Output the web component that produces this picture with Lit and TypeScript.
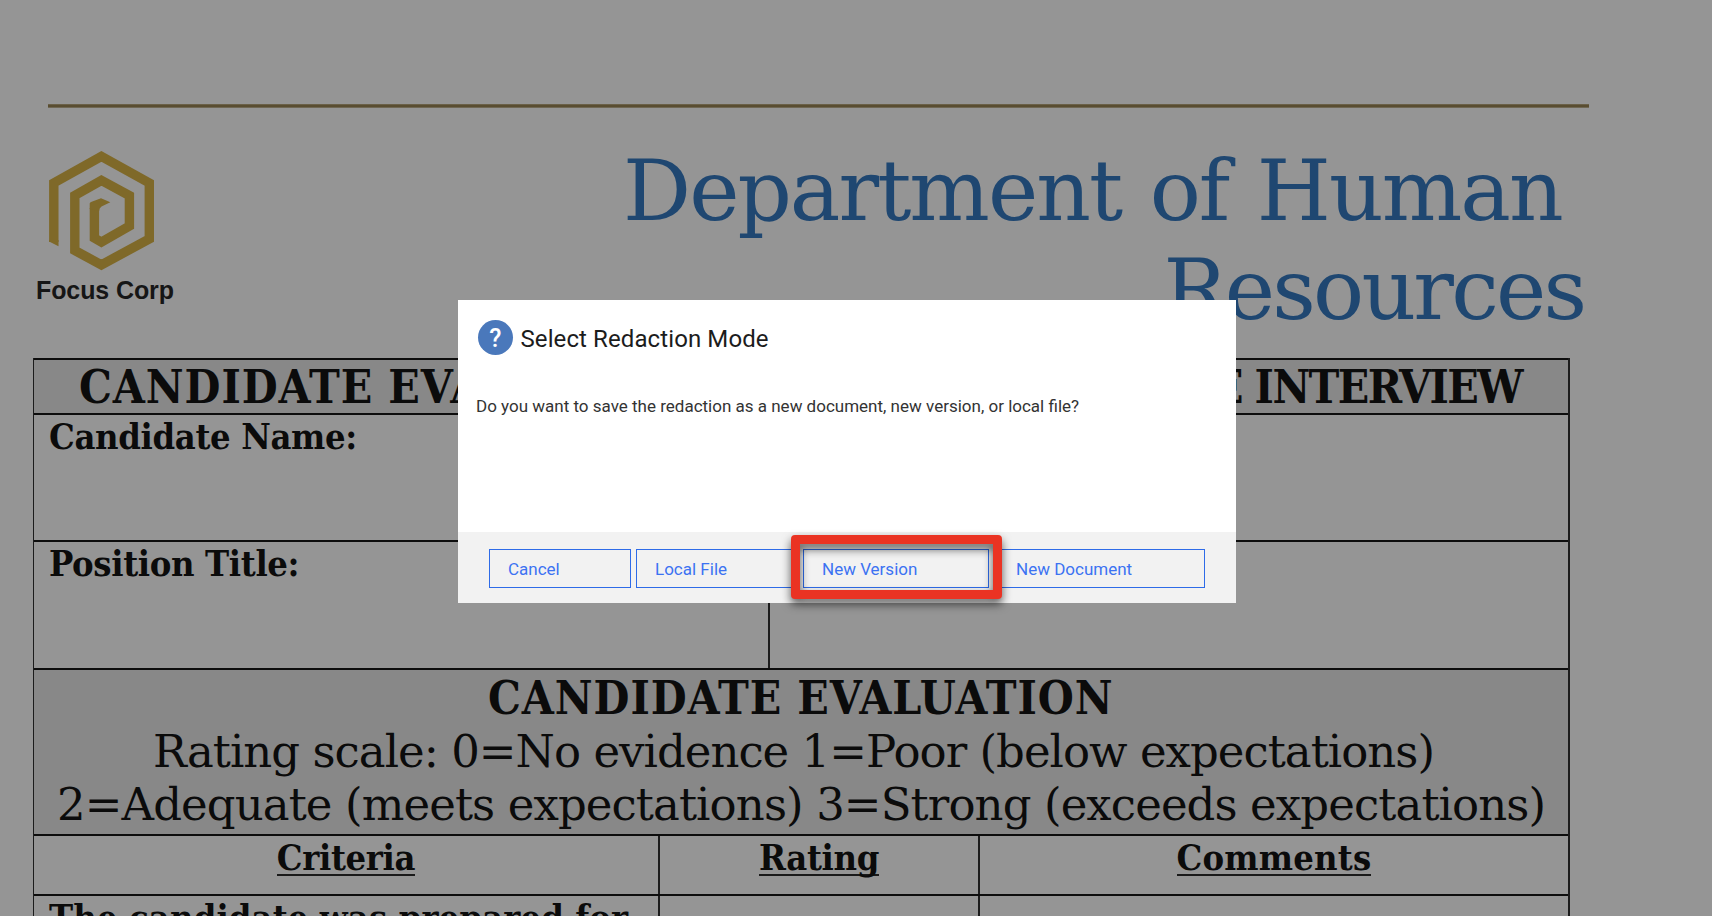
import { LitElement, html, css } from "lit";
import { customElement } from "lit/decorators.js";

@customElement("doc-page")
class DocPage extends LitElement {
  static styles = css`
    :host {
      display: block;
      height: 100%;
      overflow: hidden;
      color: #0b0b0b;
      background: #959595;
      font-family: "DejaVu Serif", serif;
      white-space: nowrap;
    }
    .rule { margin: 104px 0 0 48px; width: 1541px; height: 4px; background: linear-gradient(#6a6048 0 1px, #594d31 1px 3px, #6f6753 3px); }
    .head { display: flex; height: 250px; }
    .brand { width: 210px; padding-top: 39px; }
    .brand svg { display: block; margin-left: 44px; }
    .name { margin: 1px 0 0 36px; font: bold 25px/30px "Liberation Sans", sans-serif; color: #161616; letter-spacing: -0.1px; }
    h1 { margin: 0; padding-top: 33px; font-size: 85px; line-height: 99px; font-weight: 400; color: #1f4771; }
    .l1 { margin-left: 413px; letter-spacing: -2px; word-spacing: 3.5px; }
    .l2 { margin-left: 953.5px; letter-spacing: -2.8px; }
    .table { margin-left: 33px; width: 1537px; box-sizing: border-box; border: solid #1c1c1c; border-width: 0 2px 0 1px; }
    .row { display: flex; box-sizing: border-box; border-top: 2px solid #0d0d0d; }
    .shade { background: #888888; display: block; }
    .big { font-size: 45px; line-height: 53.2px; letter-spacing: -0.98px; }
    .b { font-weight: 700; font-size: 46px; letter-spacing: 0.9px; font-family: "DejaVu Serif Condensed", "DejaVu Serif", serif; font-stretch: condensed; }
    .h1r { height: 55px; }
    .h1r .inner { display: flex; justify-content: space-between; padding: 1px 46px 0 45px; line-height: 53px; }
    .tail { letter-spacing: -1.6px; }
    .h2r { height: 127px; }
    .h3r { height: 128px; }
    .h4r { height: 166px; padding-top: 2px; }
    .h5r { height: 60px; }
    .cell { box-sizing: border-box; border-left: 2px solid #1c1c1c; font: 700 36px/42px "DejaVu Serif Condensed", "DejaVu Serif", serif; font-stretch: condensed; letter-spacing: -0.35px; }
    .cell:first-child { border-left: 0; }
    .left { padding-left: 15px; }
    .half { width: 734px; }
    .c1 { width: 624px; }
    .c2 { width: 320px; }
    .c3 { flex: 1; }
    .cols .cell { text-align: center; }
    .u { display: inline-block; height: 37px; border-bottom: 2px solid #1a1a1a; line-height: 41px; }
    .c3 .u { letter-spacing: 0.2px; }
    .wide { letter-spacing: 0.12px; }
    .e1 { padding-left: 454px; }
    .e2 { padding-left: 119px; }
    .e3 { padding-left: 23px; letter-spacing: -0.9px; }
  `;
  render() {
    return html`
      <div class="rule"></div>
      <div class="head">
        <div class="brand">
          <svg width="115" height="127" viewBox="44 147 115 127" fill="none" stroke="#7f6929" stroke-width="9.4">
            <path d="M53.8 242V183L101.4 156.3 149.3 183V239L101.4 264.8 74.8 250.5V195.5L101.4 180.4 129.4 195.5V226L101.4 242 94.4 238V208"/>
            <path fill="#7f6929" stroke="none" d="M49.1 241.6V240H58.5V246.3ZM89.7 209V203.5Q89.7 202.5 91 202L101 198.3 110.3 202.3 101.5 206.5Q99.1 208 99.1 211Z"/>
          </svg>
          <div class="name">Focus Corp</div>
        </div>
        <h1><div class="l1">Department of Human</div><div class="l2">Resources</div></h1>
      </div>
      <div class="table">
        <div class="row shade big h1r"><div class="inner b"><span>CANDIDATE EVALUATION</span><span class="tail">THE INTERVIEW</span></div></div>
        <div class="row h2r"><div class="cell left half">Candidate Name:</div><div class="cell c3"></div></div>
        <div class="row h3r"><div class="cell left half">Position Title:</div><div class="cell c3"></div></div>
        <div class="row shade big h4r">
          <div class="b e1">CANDIDATE EVALUATION</div>
          <div class="e2">Rating scale: 0=No evidence 1=Poor (below expectations)</div>
          <div class="e3">2=Adequate (meets expectations) 3=Strong (exceeds expectations)</div>
        </div>
        <div class="row h5r cols"><div class="cell c1"><span class="u">Criteria</span></div><div class="cell c2"><span class="u">Rating</span></div><div class="cell c3"><span class="u">Comments</span></div></div>
        <div class="row h3r"><div class="cell left c1 wide">The candidate was prepared for</div><div class="cell c2"></div><div class="cell c3"></div></div>
      </div>`;
  }
}

@customElement("redaction-dialog")
class RedactionDialog extends LitElement {
  static styles = css`
    :host {
      position: absolute; left: 458px; top: 300px; width: 778px; height: 302.5px;
      display: flex; flex-direction: column; box-sizing: border-box;
      background: #fff; color: #1c1c1c; white-space: nowrap;
      font-family: Roboto, sans-serif;
    }
    .top { display: flex; padding: 19.5px 0 0 19.5px; align-items: flex-start; }
    .q { width: 35.5px; height: 35.5px; border-radius: 50%; background: #4a78bb; color: #fff; font: 500 25px/37px Roboto, sans-serif; text-align: center; }
    .title { margin-left: 7.5px; font-size: 24px; line-height: 38px; letter-spacing: 0.1px; }
    .msg { flex: 1; padding: 33px 0 0 18px; font-size: 17px; line-height: 30px; color: #333; }
    .foot { height: 70.5px; box-sizing: border-box; background: #f2f2f2; display: flex; gap: 5px; padding: 17px 31px 0; }
    button { all: unset; position: relative; box-sizing: border-box; height: 39px; border: 1px solid #2e6be8; padding-left: 18px; font-size: 17px; line-height: 38px; color: #3c72f2; }
    button:last-child { padding-left: 21px; }
    .mark { position: absolute; left: -13px; top: -15px; width: 211px; height: 64px; box-sizing: border-box; border: 9px solid #ea3323; border-radius: 4px; filter: drop-shadow(0 5px 5px rgba(0, 0, 0, 0.65)); z-index: 1; }
  `;
  private actions = [
    { label: "Cancel", width: 142 },
    { label: "Local File", width: 162 },
    { label: "New Version", width: 186, marked: true },
    { label: "New Document", width: 211 },
  ];
  render() {
    return html`
      <div class="top"><div class="q">?</div><div class="title">Select Redaction Mode</div></div>
      <div class="msg">Do you want to save the redaction as a new document, new version, or local file?</div>
      <div class="foot">
        ${this.actions.map((a) => html`<button style="width:${a.width}px">${a.label}${a.marked ? html`<span class="mark"></span>` : ""}</button>`)}
      </div>`;
  }
}

@customElement("app-root")
class AppRoot extends LitElement {
  static styles = css`
    :host { display: block; position: relative; width: 1712px; height: 916px; overflow: hidden; }
  `;
  render() {
    return html`<doc-page></doc-page><redaction-dialog></redaction-dialog>`;
  }
}
